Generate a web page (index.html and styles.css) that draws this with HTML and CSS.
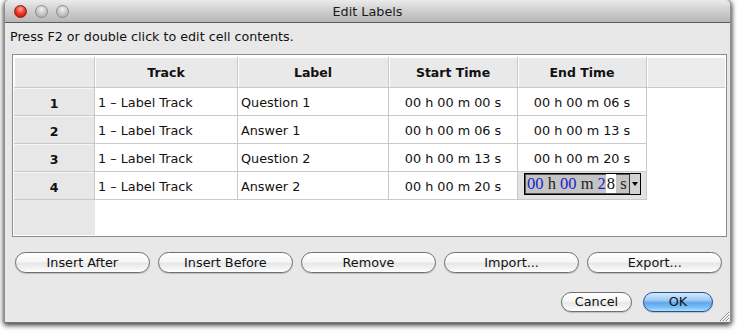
FILE: index.html
```html
<!DOCTYPE html>
<html>
<head>
<meta charset="utf-8">
<title>Edit Labels</title>
<link rel="stylesheet" href="styles.css">
</head>
<body>
<div class="stage">
  <div class="window">
    <div class="titlebar">
      <div class="lights">
        <span class="light red"></span>
        <span class="light gray"></span>
        <span class="light gray"></span>
      </div>
      <div class="title">Edit Labels</div>
    </div>
    <div class="content">
      <div class="hint">Press F2 or double click to edit cell contents.</div>
      <div class="gridbox">
        <div class="grid">
          <div class="corner hdr"></div>
          <div class="hdr">Track</div>
          <div class="hdr">Label</div>
          <div class="hdr">Start Time</div>
          <div class="hdr">End Time</div>
          <div class="hdr filler"></div>

          <div class="rowlbl">1</div>
          <div class="cell">1 – Label Track</div>
          <div class="cell">Question 1</div>
          <div class="cell time">00 h 00 m 00 s</div>
          <div class="cell time">00 h 00 m 06 s</div>
          <div class="blank"></div>

          <div class="rowlbl">2</div>
          <div class="cell">1 – Label Track</div>
          <div class="cell">Answer 1</div>
          <div class="cell time">00 h 00 m 06 s</div>
          <div class="cell time">00 h 00 m 13 s</div>
          <div class="blank"></div>

          <div class="rowlbl">3</div>
          <div class="cell">1 – Label Track</div>
          <div class="cell">Question 2</div>
          <div class="cell time">00 h 00 m 13 s</div>
          <div class="cell time">00 h 00 m 20 s</div>
          <div class="blank"></div>

          <div class="rowlbl">4</div>
          <div class="cell">1 – Label Track</div>
          <div class="cell">Answer 2</div>
          <div class="cell time">00 h 00 m 20 s</div>
          <div class="cell editing">
            <div class="editor">
              <span class="etext"><span class="d">00</span> h <span class="d">00</span> m <span class="d">2</span><span class="cur">8</span> s</span>
              <span class="drop"><span class="tri"></span></span>
            </div>
          </div>
          <div class="blank"></div>

          <div class="rowlbl rest"></div>
          <div class="rest-white"></div>
        </div>
      </div>
      <div class="actions">
        <button class="btn">Insert After</button>
        <button class="btn">Insert Before</button>
        <button class="btn">Remove</button>
        <button class="btn">Import...</button>
        <button class="btn">Export...</button>
      </div>
      <div class="footer">
        <button class="btn small">Cancel</button>
        <button class="btn small default">OK</button>
      </div>
      <div class="grip">
        <svg width="10" height="10" viewBox="0 0 10 10">
          <path d="M1 10 L10 1 M4 10 L10 4 M7 10 L10 7" stroke="#8a8a8a" stroke-width="1" fill="none"/>
          <path d="M2 10 L10 2 M5 10 L10 5 M8 10 L10 8" stroke="#ffffff" stroke-width="1" fill="none"/>
        </svg>
      </div>
    </div>
  </div>
</div>
</body>
</html>
```

FILE: styles.css
```css
html, body {
  margin: 0;
  padding: 0;
  background: #ffffff;
}
body {
  font-family: "DejaVu Sans", "Liberation Sans", sans-serif;
  font-size: 12.8px;
  color: #111;
}
.stage {
  padding-left: 4px;
  width: 733px;
  height: 333px;
  box-sizing: border-box;
}
.window {
  width: 727px;
  height: 323px;
  background: #e8e8e8;
  border-left: 1px solid #8e8e8e;
  border-right: 1px solid #8e8e8e;
  border-bottom: 1px solid #777;
  border-radius: 5px 5px 0 0;
  box-sizing: border-box;
  box-shadow: 0 3px 5px rgba(0,0,0,0.55), 2px 0 4px rgba(0,0,0,0.35), -2px 0 4px rgba(0,0,0,0.25);
  display: flex;
  flex-direction: column;
  position: relative;
}
.titlebar {
  height: 23px;
  box-sizing: border-box;
  border-bottom: 1px solid #5c5c5c;
  border-radius: 5px 5px 0 0;
  background: linear-gradient(#ebebeb, #d4d4d4 40%, #b6b6b6);
  display: flex;
  align-items: center;
  position: relative;
}
.lights {
  display: flex;
  gap: 8px;
  padding-left: 9px;
  padding-top: 1px;
}
.light {
  width: 13px;
  height: 13px;
  border-radius: 50%;
  box-sizing: border-box;
}
.light.red {
  background: radial-gradient(circle at 50% 30%, #ffb0a8 0%, #f23a2c 45%, #b80c05 100%);
  border: 1px solid #8a1a12;
}
.light.gray {
  background: radial-gradient(circle at 50% 30%, #f2f2f2 0%, #c8c8c8 50%, #a2a2a2 100%);
  border: 1px solid #8c8c8c;
}
.title {
  position: absolute;
  left: 0;
  right: 0;
  top: 4px;
  text-align: center;
  font-size: 12.8px;
  color: #1a1a1a;
}
.content {
  flex: 1;
  display: flex;
  flex-direction: column;
  position: relative;
}
.hint {
  padding: 5px 0 0 5px;
  height: 18px;
  line-height: 18px;
  font-size: 12.7px;
}
.gridbox {
  margin: 8px 3px 0 7px;
  height: 183px;
  box-sizing: border-box;
  border: 1px solid #8c8c8c;
  background: #ffffff;
  padding: 2px 1px 1px 1px;
}
.grid {
  height: 100%;
  display: grid;
  grid-template-columns: 81px 143px 151px 129px 129px 1fr;
  grid-template-rows: 31px 28px 28px 28px 28px 1fr;
  background: #ffffff;
}
.hdr {
  background: #e9e9e9;
  border-right: 1px solid #c9c9c9;
  border-bottom: 1px solid #c9c9c9;
  box-shadow: inset 1px 1px 0 #ffffff;
  font-weight: bold;
  font-size: 12.5px;
  display: flex;
  align-items: center;
  justify-content: center;
  box-sizing: border-box;
  padding-top: 1px;
}
.hdr.filler {
  border-right: none;
  background: #ececec;
}
.rowlbl {
  background: #e7e7e7;
  border-right: 1px solid #c9c9c9;
  border-bottom: 1px solid #c9c9c9;
  box-shadow: inset 0 1px 0 #f6f6f6;
  font-weight: bold;
  font-size: 12.5px;
  display: flex;
  align-items: center;
  justify-content: center;
  box-sizing: border-box;
  padding-top: 3px;
}
.rowlbl.rest {
  border-bottom: none;
  border-right: none;
  box-shadow: none;
}
.rest-white {
  grid-column: 2 / 7;
  background: #ffffff;
}
.cell {
  background: #ffffff;
  border-right: 1px solid #c9c9c9;
  border-bottom: 1px solid #c9c9c9;
  box-sizing: border-box;
  display: flex;
  align-items: center;
  padding-left: 3px;
  padding-top: 1px;
  white-space: nowrap;
}
.cell.time {
  justify-content: center;
  padding-left: 0;
}
.blank {
  background: #ffffff;
}
.cell.editing {
  background: #e3e3e3;
  padding-left: 6px;
  padding-top: 0;
}
.editor {
  width: 117px;
  height: 22px;
  box-sizing: border-box;
  border: 1px solid #000;
  box-shadow: inset 0 0 0 1px #555;
  background: #c4c4c4;
  display: flex;
  align-items: stretch;
  margin-top: -4px;
}
.etext {
  flex: 1;
  font-family: "Liberation Serif", "DejaVu Serif", serif;
  font-size: 16.5px;
  line-height: 20px;
  color: #222;
  padding-left: 2px;
  white-space: nowrap;
  overflow: hidden;
}
.etext .d {
  color: #1c22c8;
}
.etext .cur {
  background: #ffffff;
  color: #111;
  padding: 0 1px;
}
.drop {
  width: 10px;
  border-left: 1px solid #333;
  background: #d2d2d2;
  display: flex;
  align-items: center;
  justify-content: center;
}
.tri {
  width: 0;
  height: 0;
  border-left: 3px solid transparent;
  border-right: 3px solid transparent;
  border-top: 4px solid #000;
}
.actions {
  display: flex;
  gap: 8.5px;
  margin: 15px 8px 0 10px;
}
.btn {
  font-family: "DejaVu Sans", "Liberation Sans", sans-serif;
  font-size: 12.8px;
  color: #111;
  height: 21px;
  border: 1px solid #6f6f6f;
  border-radius: 11px;
  background: linear-gradient(#ffffff 0%, #f6f6f6 45%, #e7e7e7 55%, #f3f3f3 80%, #ffffff 100%);
  box-shadow: 0 1px 1px rgba(0,0,0,0.18);
  padding: 0;
  line-height: 19px;
}
.actions .btn {
  flex: 1;
}
.footer {
  display: flex;
  justify-content: flex-end;
  gap: 11px;
  margin: 19px 17px 0 0;
}
.btn.small {
  width: 71px;
  height: 20px;
  border-radius: 10px;
  line-height: 18px;
}
.btn.default {
  width: 70px;
  border-color: #27509c;
  background: linear-gradient(#d4e8fb 0%, #9fcbf5 40%, #5ea6ec 55%, #79bff7 80%, #b2e0fd 100%);
}
.grip {
  position: absolute;
  right: 1px;
  bottom: 1px;
  width: 10px;
  height: 10px;
  line-height: 0;
}
```
